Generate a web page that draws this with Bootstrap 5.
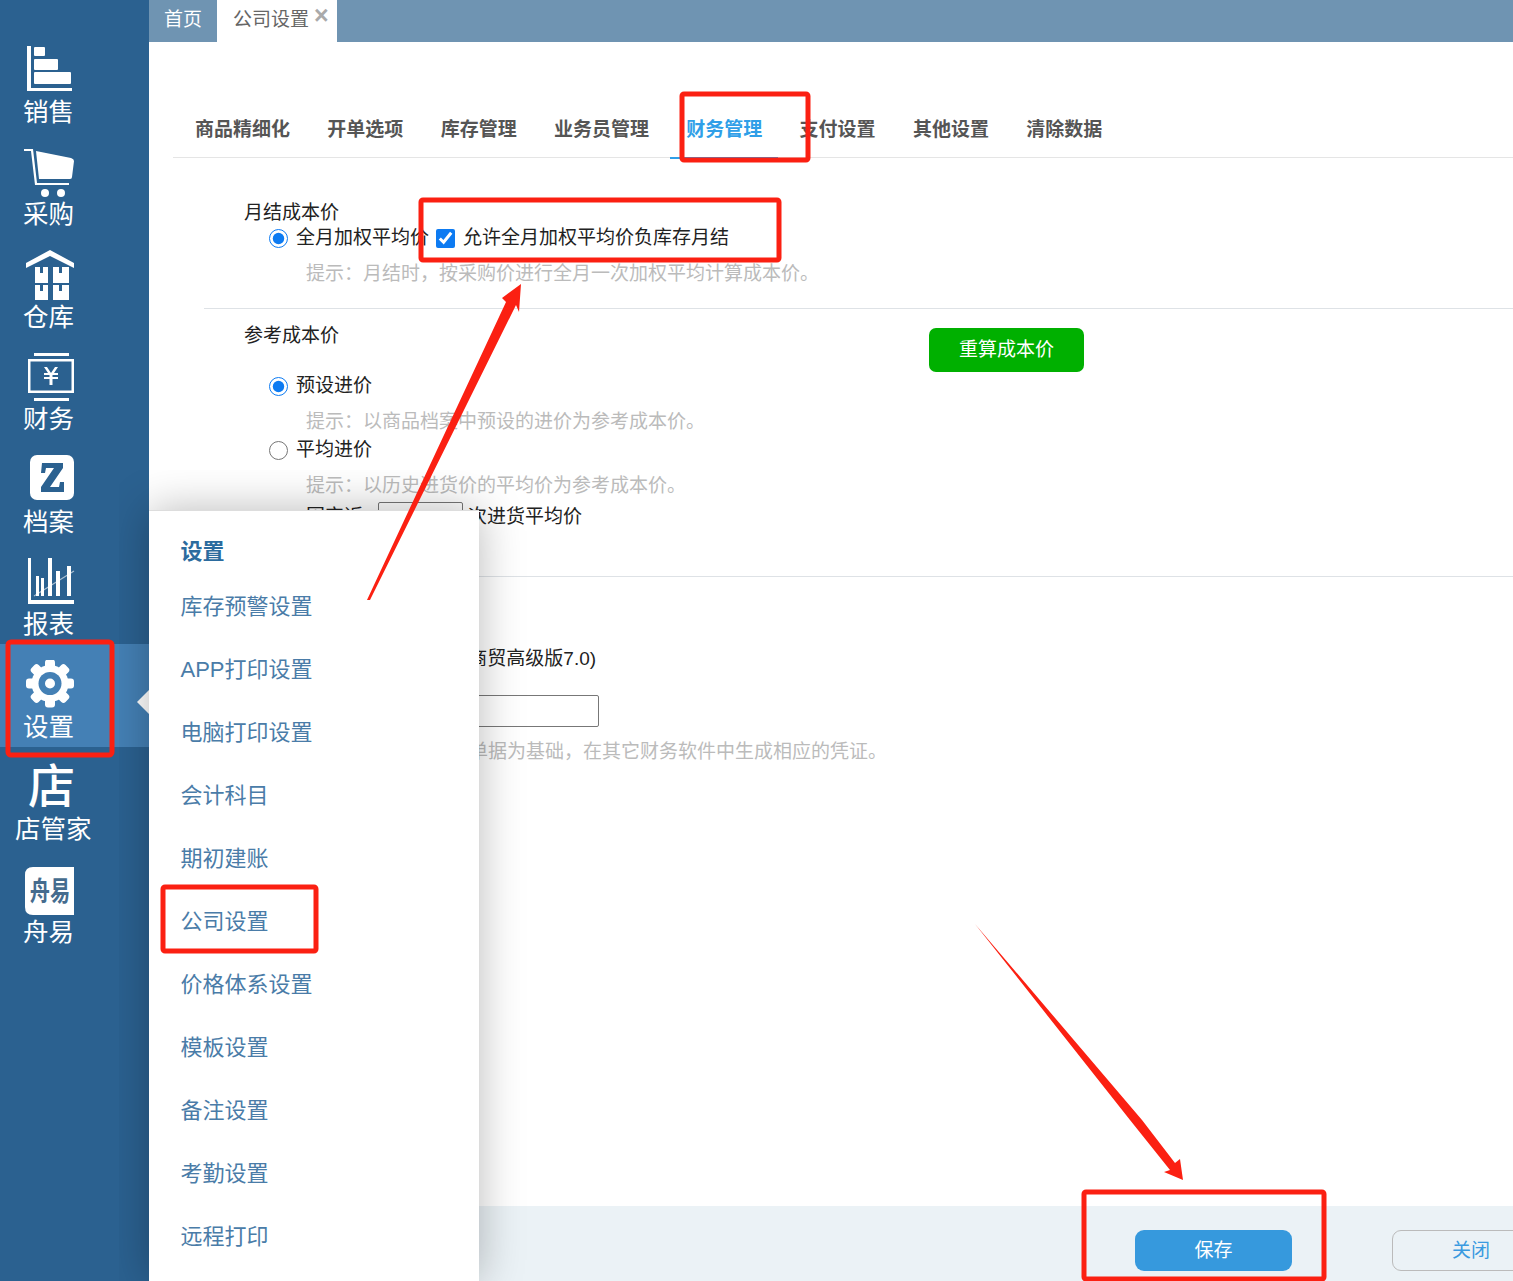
<!DOCTYPE html>
<html lang="zh"><head><meta charset="utf-8"><title>公司设置</title>
<link rel="stylesheet" href="https://cdn.jsdelivr.net/npm/bootstrap@5.3.0/dist/css/bootstrap.min.css">
<style>
html,body{height:1281px;overflow:hidden}
body{font-family:"Liberation Sans","Noto Sans CJK SC",sans-serif;font-size:19px;color:#222;background:#fff;position:relative}
.side{width:149px;height:1281px;background:#2b6190;padding-top:29px;flex:none}
.sitem{height:102.5px;color:#fff;font-size:25.5px;line-height:30px;position:relative;display:flex;flex-direction:column;padding:16px 0 0 23px}
.sitem svg{width:52px;height:52px;display:block;margin-bottom:-.5px;flex:none}
.sitem.on{background:#4480b5}
.sitem.wide{padding-left:15px}
.dianlogo{width:44px;height:50px;margin:2px 0 -.5px 13px;font-size:47px;line-height:44px;font-weight:500;flex:none;overflow:visible}
.caret{position:absolute;right:0;top:46px;border:12px solid transparent;border-left-width:0;border-right-color:#fff}
.mainp{flex:1;min-width:0;height:1281px;display:flex;flex-direction:column}
.tabsbar{height:42px;background:#6f94b2;color:#fff;font-size:19px;line-height:39px;flex:none}
.tb1{width:68px;padding-left:15px}
.tb2{width:120px;padding-left:16px;background:#fff;color:#666;position:relative}
.tbx{position:absolute;left:97px;top:-4px;color:#aaa;font-size:25px;font-weight:700}
.navz{margin:51px 0 0 24px;height:65px;border-bottom:1px solid #e5e5e5;padding-left:6px;gap:5.3px;flex:none}
.navi{font-weight:700;color:#555;padding:0 16px;line-height:74px;height:65px}
.navi.on{color:#2f9fe8;border-bottom:2px solid #2f9fe8;height:66px}
.formbody{flex:1;min-height:0}
.s1{height:151px;padding:42px 0 0 40px;margin-left:55px}
.s2{height:268px;padding:14px 0 0 40px;margin-left:55px;position:relative}
.lh{line-height:26px}
.optl{display:flex;align-items:center;line-height:26px}
.optl input{appearance:auto;width:19px;height:19px;margin:0 8px 0 25px;accent-color:#0d7bf2;flex:none}
.optl input[type=checkbox]{margin:0 8px 0 0}
.tip{color:#bbb;padding-left:62px;line-height:26px}
.grn{position:absolute;left:725px;top:19px;width:155px;height:44px;background:#00b000;color:#fff;font-size:19px;border:0;border-radius:7px;padding:0}
.inb{border:1px solid #777;border-radius:2px;background:#fff;display:inline-block;vertical-align:middle}
.fixn{margin:0 5px 0 15px;width:85px;height:31px}
.s3{padding:69px 0 0 0;margin-left:55px}
.bot{height:75px;background:#ebf2f6;flex:none;position:relative;display:flex;align-items:flex-start;padding:24px 0 0 986px;gap:100px;overflow:hidden}
.sv{width:157px;height:41px;background:#3699dd;color:#fff;border:0;border-radius:9px;padding:2px 0 0;font-size:19px;flex:none}
.cl{width:157px;height:41px;border:1px solid #bbb;background:transparent;color:#3a9ae0;border-radius:9px;padding:1px 0 0 1px;font-size:19px;flex:none}
.fly{position:absolute;left:149px;top:510px;width:330px;height:771px;background:#fff;box-shadow:0 0 42px rgba(0,0,0,.28);border-top:1px solid #ddd;padding:25px 0 0 31.5px;clip-path:inset(-40px -60px 0 -30px)}
.flyt{font-size:22px;font-weight:700;color:#2b6b9e;line-height:32px;margin-bottom:23px}
.flyi{font-size:22px;color:#4a7ca8;line-height:32px;height:63px}
.anno{position:absolute;left:0;top:0;pointer-events:none}
.gapck{margin-left:7px}
.row1{margin-top:-1px}
.optg{margin-top:10px}
.pr1{margin-top:24px}
.pr2{margin-top:2px}
.tg{margin-top:10px}
.fixr{color:#222;margin-top:3px}
.l3{padding-left:182px}
.i3{margin-top:23px;padding-left:155px}
.i3 .inb{width:240px;height:32px}
.t3{margin-top:12px;padding-left:113px}
</style></head><body>
<div class="d-flex">
<div class="side">
 <div class="sitem"><svg viewBox="0 0 52 52" fill="#fff"><path d="M4 1h4v42h41v3H4z"/><rect x="11" y="2" width="11" height="9" rx="1"/><rect x="11" y="14" width="24" height="11" rx="1"/><rect x="11" y="27" width="37" height="12" rx="1"/></svg>销售</div>
 <div class="sitem"><svg viewBox="0 0 52 52" fill="#fff"><path d="M1 1h9l4 34h32v2H12L8 3H1z"/><path d="M13 3l35 7q3 1 3 3l-2 16q0 2-2 2H16z"/><circle cx="22" cy="45" r="4"/><circle cx="38" cy="45" r="4"/></svg>采购</div>
 <div class="sitem"><svg viewBox="0 0 52 52" fill="#fff"><path d="M27 0L51 13v5L27 6 3 18v-5z"/><path d="M12 17h5v6h3v-6h5v16H12zM30 17h6v6h3v-6h7v16H30zM12 35h5v6h3v-6h5v15H12zM30 35h6v6h3v-6h7v15H30z"/></svg>仓库</div>
 <div class="sitem"><svg viewBox="0 0 52 52" fill="#fff"><rect x="11" y="0" width="35" height="3"/><rect x="11" y="45" width="35" height="3"/><path fill-rule="evenodd" d="M5 6h46v34H5zm2.500 2.500v29h41v-29z"/><path d="M21 14h3l4 6 4-6h3l-4 6h4v2h-5.500v2H35v2h-5.500v6h-3v-6H21v-2h5.500v-2H21v-2h4z"/></svg>财务</div>
 <div class="sitem"><svg viewBox="0 0 52 52"><rect x="7" y="0" width="44" height="45" rx="7" fill="#fff"/><path d="M19 8h21v5L27 32h9l1-5h4v10H18v-5L31 13h-8l-1 5h-4z" fill="#2b6190"/></svg>档案</div>
 <div class="sitem"><svg viewBox="0 0 52 52" fill="#fff"><path d="M5 0h3v42h43v4H5z"/><rect x="13" y="18" width="3" height="20"/><rect x="18" y="20" width="3" height="18"/><rect x="25" y="0" width="4" height="38"/><rect x="33" y="13" width="4" height="25"/><rect x="44" y="8" width="4" height="30"/><path d="M11 38L51 13" stroke="#fff" stroke-width="1.200" opacity=".6"/></svg>报表</div>
 <div class="sitem on"><svg viewBox="0 0 52 52"><g transform="translate(27 23.500)" fill="#fff"><circle r="18.500"/><rect x="-5" y="-24" width="10" height="12" rx="3"/><rect x="-5" y="-24" width="10" height="12" rx="3" transform="rotate(45)"/><rect x="-5" y="-24" width="10" height="12" rx="3" transform="rotate(90)"/><rect x="-5" y="-24" width="10" height="12" rx="3" transform="rotate(135)"/><rect x="-5" y="-24" width="10" height="12" rx="3" transform="rotate(180)"/><rect x="-5" y="-24" width="10" height="12" rx="3" transform="rotate(225)"/><rect x="-5" y="-24" width="10" height="12" rx="3" transform="rotate(270)"/><rect x="-5" y="-24" width="10" height="12" rx="3" transform="rotate(315)"/><circle r="11.500" fill="#4480b5"/><circle r="5"/></g></svg>设置<span class="caret"></span></div>
 <div class="sitem wide"><div class="dianlogo">店</div>店管家</div>
 <div class="sitem"><svg viewBox="0 0 52 52"><path d="M10 2h41v48H10q-8 0-8-8V10q0-8 8-8z" fill="#fff"/><text transform="translate(27 36) scale(.88 1.200)" text-anchor="middle" font-size="23" font-family="Noto Sans CJK SC" fill="#456c8e" font-weight="700">舟易</text></svg>舟易</div>
</div>
<div class="mainp">
 <div class="tabsbar d-flex"><div class="tb1">首页</div><div class="tb2">公司设置<span class="tbx">×</span></div></div>
 <div class="navz d-flex">
  <div class="navi">商品精细化</div><div class="navi">开单选项</div><div class="navi">库存管理</div><div class="navi">业务员管理</div><div class="navi on">财务管理</div><div class="navi">支付设置</div><div class="navi">其他设置</div><div class="navi">清除数据</div>
 </div>
 <div class="formbody">
  <div class="s1 border-bottom">
   <div class="lh">月结成本价</div>
   <div class="d-flex row1"><label class="optl"><input type="radio" name="a" checked>全月加权平均价</label><label class="optl gapck"><input type="checkbox" checked>允许全月加权平均价负库存月结</label></div>
   <div class="tip optg">提示：月结时，按采购价进行全月一次加权平均计算成本价。</div>
  </div>
  <div class="s2 border-bottom">
   <div class="lh">参考成本价</div>
   <button class="grn">重算成本价</button>
   <label class="optl pr1"><input type="radio" name="b" checked>预设进价</label>
   <div class="tip tg">提示：以商品档案中预设的进价为参考成本价。</div>
   <label class="optl pr2"><input type="radio" name="b">平均进价</label>
   <div class="tip tg">提示：以历史进货价的平均价为参考成本价。</div>
   <div class="tip fixr">固定近<span class="inb fixn"></span>次进货平均价</div>
  </div>
  <div class="s3">
   <div class="lh l3">财务软件(商贸高级版7.0)</div>
   <div class="i3"><span class="inb"></span></div>
   <div class="tip t3">提示：以已审核的单据为基础，在其它财务软件中生成相应的凭证。</div>
  </div>
 </div>
 <div class="bot"><button class="sv">保存</button><button class="cl">关闭</button></div>
</div>
</div>
<div class="fly">
 <div class="flyt">设置</div>
 <div class="flyi">库存预警设置</div><div class="flyi">APP打印设置</div><div class="flyi">电脑打印设置</div><div class="flyi">会计科目</div><div class="flyi">期初建账</div><div class="flyi">公司设置</div><div class="flyi">价格体系设置</div><div class="flyi">模板设置</div><div class="flyi">备注设置</div><div class="flyi">考勤设置</div><div class="flyi">远程打印</div>
</div>
<svg class="anno" width="1513" height="1281" fill="none" stroke="#fb2012" stroke-width="5">
 <rect x="682" y="94" width="126" height="66" rx="2"/><rect x="421" y="200" width="358" height="60" rx="2"/><rect x="8" y="642" width="104" height="113" rx="3"/><rect x="163" y="887" width="153" height="64" rx="2"/><rect x="1084" y="1192" width="240" height="87" rx="2"/>
 <path fill="#fb2012" stroke="none" d="M367 600L506 302 502 298 521 284 519 312 516 305 370 600z"/>
 <path fill="#fb2012" stroke="none" d="M975 924L1142 1120 1175 1163 1180 1159 1183 1180 1164 1172 1170 1170 1130 1120z"/>
</svg>
</body></html>
